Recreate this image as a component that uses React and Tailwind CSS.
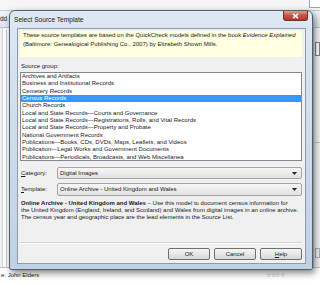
import React from "react";

const groups = [
  "Archives and Artifacts",
  "Business and Institutional Records",
  "Cemetery Records",
  "Census Records",
  "Church Records",
  "Local and State Records\u2014Courts and Governance",
  "Local and State Records\u2014Registrations, Rolls, and Vital Records",
  "Local and State Records\u2014Property and Probate",
  "National Government Records",
  "Publications\u2014Books, CDs, DVDs, Maps, Leaflets, and Videos",
  "Publication\u2014Legal Works and Government Documents",
  "Publications\u2014Periodicals, Broadcasts, and Web Miscellanea",
];

function Combo({ value }) {
  return (
    <div className="flex-1 h-full flex items-center justify-between rounded-[2px] border border-[#a5a5a5] bg-gradient-to-b from-[#f7f7f7] to-[#e2e2e2] pl-[2px] pr-[4px]">
      <span>{value}</span>
      <svg width="5" height="3" viewBox="0 0 5 3">
        <path d="M0 0H5L2.5 3Z" fill="#222" />
      </svg>
    </div>
  );
}

function Button({ children }) {
  return (
    <div className="w-[42px] h-[12px] flex items-center justify-center rounded-[2px] border border-[#707070] bg-gradient-to-b from-[#f4f4f4] via-[#e8e8e8] to-[#d6d6d6]">
      {children}
    </div>
  );
}

export default function App() {
  return (
    <div className="relative w-[320px] h-[284px] overflow-hidden bg-white text-[6px] text-[#1a1a1a] font-['Liberation_Sans',Arial,sans-serif]">
      {/* application behind the dialog */}
      <div className="flex flex-col h-full">
        <div className="h-[11px] bg-[#f6f6f6] border-b border-[#c9c9c9] flex justify-end">
          <div className="w-[11px] h-[8px] border-l border-b border-[#9aa6b2] bg-white" />
        </div>
        <div className="h-[17px] bg-gradient-to-b from-[#f0f3f7] to-[#dfe6ee] border-b border-[#b7c3cf] flex items-center">
          <span className="text-[6.5px]">dd</span>
        </div>
        <div className="flex-1 flex">
          <div className="w-[8px] flex">
            <div className="w-[3px] bg-[#eef0f2] border-r border-[#cfd4d9]" />
            <div className="w-[4px] mt-[2px] bg-white border-r border-[#c5cbd1]" />
          </div>
          <div className="flex-1 bg-white" />
          <div className="w-[7px] flex flex-col pt-[14px] pl-[1px] bg-[#f2f4f6] border-l border-[#c9d0d7]">
            <div className="h-[14px] w-[5px] border border-[#4f8fc9] bg-white" />
            <div className="mt-[86px] h-[1px] bg-[#c0c6cc]" />
            <div className="mt-[105px] h-[10px] w-[5px] border border-[#a9b0b7] bg-[#f4f4f4]" />
          </div>
        </div>
        <div className="h-[14px] pt-[2px] bg-white border-t border-[#c4c4c4] flex items-center justify-between">
          <span className="pl-[1px]">e: John Elders</span>
          <span className="mr-[36px] text-[#a5a5a5] tracking-[-0.5px]">{"\u2606\u2606\u2606\u2606"}</span>
        </div>
        <div className="h-[3px] bg-white" />
      </div>

      {/* dialog window */}
      <div className="absolute left-[9px] top-[10px] w-[304px] h-[260px] flex flex-col rounded-t-[6px] rounded-b-[2px] border border-[#50606f] bg-gradient-to-b from-[#dde8f3] via-[#cddbea] to-[#bfd1e4] shadow-[2px_3px_7px_rgba(0,0,0,0.5)]">
        <div className="h-[17px] flex items-start justify-between">
          <span className="pl-[4px] pt-[4px] text-[6.6px] text-[#1b1b1b]">Select Source Template</span>
          <div className="mr-[4px] w-[25px] h-[10px] flex items-center justify-center rounded-b-[3px] border border-t-0 border-[#6d3030] bg-gradient-to-b from-[#e59b8c] via-[#c9523f] to-[#b33a2a]">
            <svg width="7" height="6" viewBox="0 0 7 6">
              <path d="M1 0.8L6 5.2M6 0.8L1 5.2" stroke="#fff" strokeWidth="1.6" />
            </svg>
          </div>
        </div>
        <div className="ml-[7px] mr-[6px] h-[236px] flex flex-col border border-[#8c9cad] bg-[#f0f0f0]">
          <div className="mt-[2px] ml-[2px] mr-[3px] h-[26px] px-[3px] leading-[9px] bg-[#ffffe1] whitespace-nowrap">
            These source templates are based on the QuickCheck models defined in the book <i>Evidence Explained</i>
            <br />
            (Baltimore: Genealogical Publishing Co., 2007) by Elizabeth Shown Mills.
          </div>
          <div className="mt-[5px] ml-[3px] leading-[8px]">Source group:</div>
          <div className="mt-[2px] ml-[2px] mr-[3px] h-[89px] border border-[#828790] bg-white whitespace-nowrap">
            {groups.map((g, i) => (
              <div key={i} className={"h-[7.34px] leading-[7.34px] pl-[1px] " + (i === 3 ? "bg-[#3399ff] text-white" : "")}>
                {g}
              </div>
            ))}
          </div>
          <div className="mt-[6px] ml-[2px] mr-[3px] h-[12px] flex items-center">
            <span className="w-[37px] pl-[1px]"><u>C</u>ategory:</span>
            <Combo value="Digital Images" />
          </div>
          <div className="mt-[4px] ml-[2px] mr-[3px] h-[13px] flex items-center">
            <span className="w-[37px] pl-[1px]"><u>T</u>emplate:</span>
            <Combo value="Online Archive - United Kingdom and Wales" />
          </div>
          <div className="mt-[4px] ml-[3px] leading-[7px] whitespace-nowrap">
            <b>Online Archive - United Kingdom and Wales</b> {"\u2013"} Use this model to document census information for
            <br />
            the United Kingdom (England, Ireland, and Scotland) and Wales from digital images in an online archive.
            <br />
            The census year and geographic place are the lead elements in the Source List.
          </div>
          <div className="mt-auto ml-[2px] mr-[3px] h-[2px] border-t border-[#d3d3d3] border-b border-b-white" />
          <div className="mt-[4px] mb-[3px] mr-[3px] flex justify-end gap-[4px]">
            <Button>OK</Button>
            <Button>Cancel</Button>
            <Button><u>H</u>elp</Button>
          </div>
        </div>
      </div>
    </div>
  );
}
